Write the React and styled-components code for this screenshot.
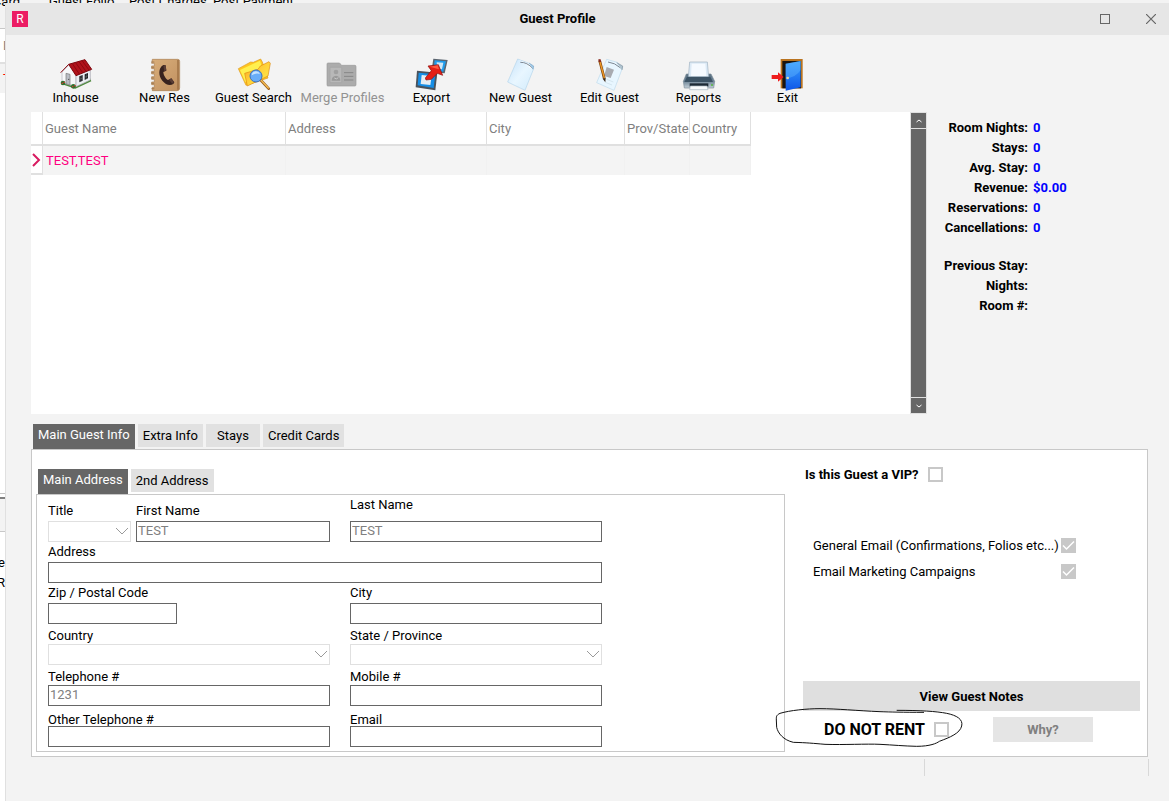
import React, { useState } from 'react';
import styled, { createGlobalStyle, css } from 'styled-components';

const palette = {
    window: '#f3f3f3',
    titlebar: '#e6e6e6',
    tab: '#e1e1e1',
    dark: '#666666',
    line: '#c8c8c8',
    lightline: '#e0e0e0',
    gray: '#808080',
    pink: '#ff0080',
    brand: '#ec1c64',
    blue: '#0000ff',
};

const GlobalStyle = createGlobalStyle`
    * {
        box-sizing: border-box;
    }
    body {
        margin: 0;
        background-color: white;
        color: black;
        font-family: Roboto, sans-serif;
        font-size: 13px;
        line-height: 16px;
    }
    button, input, select {
        margin: 0;
        font: inherit;
        border-radius: 0;
    }
`;

// parent window and dialog share one grid cell
const Desktop = styled.div`
    display: grid;
    min-height: 100vh;
    overflow: hidden;
    > * {
        grid-area: 1 / 1;
    }
`;

const ParentWindow = styled.div`
    display: flex;
    flex-direction: column;
    min-width: 0;
`;

const ParentMenu = styled.div`
    display: grid;
    grid-template-columns: 49px 80px 84px auto;
    grid-template-rows: 10px;
    align-items: end;
    height: 28px;
    background-color: ${palette.window};
    white-space: nowrap;

    .cut {
        display: flex;
        justify-content: flex-end;
        width: 20px;
    }
`;

const ParentBand = styled.div`
    display: flex;
    align-items: center;
    justify-content: ${(props) => (props.$end ? 'flex-end' : 'flex-start')};
    width: 5px;
    height: ${(props) => props.$height}px;
    padding-left: ${(props) => (props.$end ? 0 : 3)}px;
    color: ${(props) => props.$color || 'black'};
    background-color: ${(props) => (props.$shaded ? palette.window : 'white')};
    border-top: ${(props) => (props.$top ? `1px solid ${palette.line}` : 'none')};
    border-bottom: ${(props) => (props.$bottom ? `2px solid ${props.$bottom}` : 'none')};
`;

const Dialog = styled.main`
    display: flex;
    flex-direction: column;
    min-width: 0;
    margin: 3px 0 0 5px;
    background-color: ${palette.window};
    border-left: 1px solid ${palette.lightline};
`;

const TitleBar = styled.header`
    display: flex;
    align-items: center;
    height: 32px;
    padding-left: 6px;
    background-color: ${palette.titlebar};

    h1 {
        flex: 1;
        margin: 0;
        text-align: center;
        font-size: 13px;
        font-weight: bold;
    }
`;

const Logo = styled.span`
    width: 16px;
    height: 16px;
    text-align: center;
    font-size: 12px;
    color: white;
    background-color: ${palette.brand};
`;

const WindowButtons = styled.div`
    display: flex;
    gap: 10px;
`;

const WindowButton = styled.button`
    display: flex;
    align-items: center;
    justify-content: center;
    width: 36px;
    height: 32px;
    padding: 0;
    border: none;
    background: none;
`;

const Toolbar = styled.nav`
    display: flex;
    padding: 23px 0 6px 25px;
`;

const ToolButton = styled.button`
    display: flex;
    flex-direction: column;
    align-items: center;
    width: 89px;
    padding: 0;
    border: none;
    background: none;
    color: black;
    white-space: nowrap;

    &:disabled {
        color: #929292;
    }
    svg {
        display: block;
        overflow: visible;
    }
`;

const TopArea = styled.section`
    display: flex;
    height: 302px;
    padding-left: 25px;
`;

const GuestGrid = styled.div`
    flex: 1;
    min-width: 0;
    display: flex;
    justify-content: space-between;
    background-color: white;
`;

const GuestTable = styled.table`
    table-layout: fixed;
    width: 720px;
    height: 63px;
    border-collapse: separate;
    border-spacing: 0;

    th, td {
        padding: 0 0 0 2px;
        text-align: left;
        font-weight: normal;
        white-space: nowrap;
    }
    th {
        height: 34px;
        padding-top: 2px;
        color: ${palette.gray};
        border-right: 1px solid ${palette.lightline};
        border-bottom: 2px solid ${palette.lightline};
    }
    td {
        height: 29px;
        padding-left: 3px;
        color: ${palette.pink};
        background-color: #f4f4f4;
        border-right: 1px solid #f1f1f1;
    }
    td:first-child {
        padding: 0;
        background-color: white;
        border-right: 1px solid ${palette.lightline};
        border-bottom: 2px solid ${palette.lightline};
    }
    td svg {
        display: block;
        margin-left: 1px;
    }
`;

const ScrollBar = styled.div`
    display: flex;
    flex-direction: column;
    gap: 1px;
    width: 17px;
    padding: 1px;
    background-color: ${palette.lightline};
`;

const ScrollButton = styled.button`
    display: flex;
    align-items: center;
    justify-content: center;
    height: 15px;
    padding: 0;
    border: none;
    background-color: ${palette.dark};
`;

const ScrollTrack = styled.div`
    flex: 1;
    background-color: ${palette.dark};
`;

const Stats = styled.dl`
    display: grid;
    grid-template-columns: 101px 1fr;
    grid-auto-rows: 20px;
    column-gap: 5px;
    margin: 0;
    padding-top: 6px;
    font-weight: bold;
    line-height: 20px;

    dt {
        text-align: right;
    }
    dd {
        margin: 0;
        color: ${palette.blue};
    }
`;

const StatsColumn = styled.aside`
    width: 242px;

    dl + dl {
        margin-top: 12px;
    }
`;

const TabBar = styled.div`
    display: flex;
    align-items: flex-start;
    gap: 3px;
    height: 25px;
    padding-left: 2px;
`;

const Tab = styled.button`
    min-width: 54px;
    height: 23px;
    padding: 0 5px;
    border: none;
    line-height: 23px;
    color: black;
    background-color: ${palette.tab};

    ${(props) => props.$active && css`
        height: 25px;
        padding-bottom: 4px;
        line-height: 21px;
        color: white;
        background-color: ${palette.dark};
    `}
`;

const InfoArea = styled.section`
    padding: 10px 21px 0 25px;
`;

const InfoPanel = styled.div`
    display: grid;
    grid-template-columns: minmax(0, 753px) minmax(0, 1fr);
    background-color: white;
    border: 1px solid ${palette.line};
`;

const AddressColumn = styled.div`
    padding: 19px 0 4px 4px;
`;

const AddressForm = styled.form`
    display: grid;
    grid-template-columns: 83px 194px 267px;
    grid-auto-rows: minmax(41px, auto);
    align-items: end;
    column-gap: 5px;
    padding: 4px 11px;
    border: 1px solid ${palette.line};
`;

const FieldBox = styled.div`
    display: flex;
    flex-direction: column;
    grid-column: ${(props) => props.$column};
    gap: ${(props) => props.$gap}px;
    padding-left: ${(props) => (props.$right ? 15 : 0)}px;

    label {
        line-height: 12px;
        white-space: nowrap;
    }
`;

const TextInput = styled.input`
    width: ${(props) => (props.$width ? `${props.$width}px` : '100%')};
    height: 21px;
    padding: 0 1px 2px;
    color: ${palette.gray};
    background-color: white;
    border: 1px solid ${palette.dark};
    outline: none;
`;

const SelectBox = styled.div`
    position: relative;
    height: 21px;

    select {
        display: block;
        width: 100%;
        height: 21px;
        appearance: none;
        background-color: white;
        border: 1px solid ${palette.lightline};
    }
    svg {
        position: absolute;
        top: 6px;
        right: 2px;
        pointer-events: none;
    }
`;

const SideColumn = styled.div`
    display: flex;
    flex-direction: column;
    padding: 17px 7px 14px 18px;
`;

const CheckRow = styled.div`
    display: flex;
    align-items: center;
    gap: 9px;
    height: 15px;
    padding-left: ${(props) => props.$indent}px;

    label {
        width: ${(props) => (props.$labelWidth ? `${props.$labelWidth}px` : 'auto')};
        font-weight: ${(props) => (props.$bold ? 'bold' : 'normal')};
        font-size: ${(props) => (props.$large ? 16 : 13)}px;
        white-space: nowrap;
    }
`;

const CheckBox = styled.input`
    flex: none;
    width: 15px;
    height: 15px;
    appearance: none;
    background-color: white;
    border: 2px solid ${palette.line};

    &:checked {
        border: none;
        background: ${palette.line} url("data:image/svg+xml,%3Csvg xmlns='http://www.w3.org/2000/svg' width='15' height='15' fill='none' stroke='white' stroke-width='1.5'%3E%3Cpath d='M2 7.5 L5.5 11 L13 3.5'/%3E%3C/svg%3E");
    }
`;

const MailOptions = styled.div`
    display: flex;
    flex-direction: column;
    gap: 11px;
    margin-top: 56px;
`;

const NotesButton = styled.button`
    height: 30px;
    margin-top: auto;
    padding: 2px 0 0;
    border: none;
    font-weight: bold;
    color: black;
    background-color: #dfdfdf;
`;

const RentRow = styled.div`
    position: relative;
    display: flex;
    align-items: center;
    justify-content: space-between;
    margin-top: 6px;
    padding-right: 47px;
`;

const WhyButton = styled.button`
    width: 100px;
    height: 25px;
    padding: 1px 0 0;
    border: none;
    font-weight: bold;
    color: ${palette.gray};
    background-color: #e5e5e5;
`;

// hand drawn ring that lies over the row
const PenMark = styled.svg`
    position: absolute;
    left: -29px;
    top: -10px;
    pointer-events: none;
`;

const StatusBar = styled.footer`
    display: flex;
    justify-content: flex-end;
    padding: 2px 20px 25px 0;
`;

const StatusCell = styled.div`
    width: 225px;
    height: 17px;
    border: solid #d8d8d8;
    border-width: 0 1px;
`;

const Icon = ({ children }) => (
    <svg width="32" height="32" viewBox="0 0 96 96" aria-hidden="true">{children}</svg>
);

const HouseIcon = () => (
    <Icon>
        <path d="M4 78 L46 92 L94 70 L90 60 L46 80 L10 68Z" fill="#4d8a3c" />
        <path d="M6 42 L28 20 L48 50 L48 86 L6 74Z" fill="#f7f7f9" stroke="#b4b4bc" strokeWidth="2" />
        <path d="M48 50 L91 34 L91 66 L48 86Z" fill="#eceef4" stroke="#a4a4ae" strokeWidth="2" />
        <path d="M26 19 L75 5 L95 34 L48 53Z" fill="#b0121b" stroke="#7d060e" strokeWidth="3" />
        <path d="M37 17 L58 48 M47 14 L68 44 M57 11 L78 40 M67 9 L87 36" stroke="#8c0810" strokeWidth="3" />
        <path d="M26 19 L2 44" stroke="#8d0a12" strokeWidth="3" />
        <path d="M18 46 L30 49 L30 82 L18 77Z" fill="#b9bcc4" stroke="#777" strokeWidth="2" />
        <circle cx="26" cy="64" r="2" fill="#444" />
        <path d="M58 55 L68 51 L68 68 L58 73Z M74 49 L84 45 L84 61 L74 66Z" fill="#1d1f22" />
        <path d="M63 53 V71 M58 64 L68 60 M79 47 V64 M74 58 L84 53" stroke="#9b9da3" strokeWidth="1" />
        <circle cx="9" cy="75" r="7" fill="#2f7030" />
        <circle cx="40" cy="85" r="7" fill="#2f7030" />
        <path d="M5 74h4v4h-4z M11 71h4v4h-4z M36 84h4v4h-4z M43 81h4v4h-4z" fill="#d43a2e" />
    </Icon>
);

const PhoneBookIcon = () => (
    <Icon>
        <defs>
            <linearGradient id="leather" x1="0" y1="0" x2="1" y2="1">
                <stop offset="0" stopColor="#d9ae7a" />
                <stop offset="1" stopColor="#c09060" />
            </linearGradient>
        </defs>
        <path d="M10 4 H86 Q92 4 92 10 V90 Q92 98 84 98 H10 V88 H16 V80 H8 V72 H16 V64 H8 V56 H16 V48 H8 V40 H16 V32 H8 V24 H16 V16 H8Z" fill="url(#leather)" stroke="#a87c4e" strokeWidth="2" />
        <path d="M87 6 V95" stroke="#9a6c40" strokeWidth="4" />
        <path d="M7 12h9 M7 28h9 M7 44h9 M7 60h9 M7 76h9 M7 92h9" stroke="#8d6743" strokeWidth="2" />
        <path d="M43 21 C27 30 28 54 40 68 C50 80 62 85 73 78 L76 73 L67 61 L57 66 C50 63 43 50 43 42 L52 38 L50 22Z" fill="#38231f" />
        <path d="M43 23 L50 22 L52 37 L46 40Z M60 65 L67 61 L75 72 L70 77Z" fill="#5a3d35" />
    </Icon>
);

const SearchIcon = () => (
    <Icon>
        <defs>
            <linearGradient id="folder" x1="0" y1="0" x2="1" y2="1">
                <stop offset="0" stopColor="#ffa21c" />
                <stop offset="0.5" stopColor="#ffd23a" />
                <stop offset="1" stopColor="#fff04a" />
            </linearGradient>
        </defs>
        <path d="M1 32 L38 12 L46 13 L68 3 L73 12 L90 60 L24 82Z" fill="#ffc61f" stroke="#dd9a24" strokeWidth="2" />
        <path d="M6 36 L66 8 L76 42 L22 72Z" fill="#fff04e" />
        <path d="M20 46 L60 34 L67 24 L93 11 L97 16 L90 54 L28 84Z" fill="url(#folder)" stroke="#e08a12" strokeWidth="2" />
        <path d="M68 66 L92 92" stroke="#9b5d1b" strokeWidth="8" strokeLinecap="round" />
        <path d="M69 66 L91 90" stroke="#f3bb52" strokeWidth="4" strokeLinecap="round" />
        <circle cx="54" cy="54" r="18" fill="#69adf8" stroke="#3a6fc0" strokeWidth="3" />
        <path d="M41 52 A13 13 0 0 1 66 48 Q54 44 41 52Z" fill="#c6e3ff" />
    </Icon>
);

const MergeIcon = () => (
    <Icon>
        <path d="M2 84 Q0 84 0 80 V18 Q0 15 3 15 H36 Q40 15 43 22 H84 Q87 22 87 26 V80 Q87 84 84 84Z" fill="#acacac" stroke="#9c9c9c" strokeWidth="2" />
        <path d="M9 28 H44 V74 H9Z" fill="#b8b8b8" stroke="#a4a4a4" strokeWidth="2" />
        <circle cx="27" cy="42" r="7" fill="#a0a0a0" />
        <path d="M14 68 Q14 54 27 53 Q40 54 40 68Z" fill="#999" />
        <path d="M22 60 Q28 66 34 59" fill="none" stroke="#c8c8c8" strokeWidth="3" />
        <path d="M51 44 H79 M51 55 H79 M51 66 H79" stroke="#868686" strokeWidth="3" />
    </Icon>
);

const ExportIcon = () => (
    <Icon>
        <path d="M52 2 L95 6 L86 46 L46 42Z" fill="#5a646f" />
        <path d="M56 7 L90 10 L82 41 L52 38Z" fill="#1f9cec" />
        <path d="M62 13 L82 14 L78 34 L64 32Z" fill="#cfe6f4" />
        <path d="M3 38 L64 44 L58 97 L-1 88Z" fill="#4a535d" />
        <path d="M8 44 L58 49 L53 90 L5 82Z" fill="#168ee6" />
        <path d="M17 51 L47 54 L43 81 L14 78Z" fill="#e6edf3" />
        <path d="M28 60 L46 38 L36 24 L67 20 L80 52 L64 46 L46 64 L30 66Z" fill="#e41f16" stroke="#8d0d0a" strokeWidth="2" />
        <path d="M41 26 L65 22 L69 34Z" fill="#ff5a40" />
    </Icon>
);

const NewGuestIcon = () => (
    <Icon>
        <defs>
            <linearGradient id="sheet" x1="0" y1="0" x2="1" y2="1">
                <stop offset="0" stopColor="#c6e2fa" />
                <stop offset="0.5" stopColor="#e8f6ff" />
                <stop offset="1" stopColor="#d2ebfb" />
            </linearGradient>
        </defs>
        <path d="M38 3 L72 16 L86 32 L60 97 L8 72Z" fill="url(#sheet)" stroke="#b4d4ec" strokeWidth="2" />
        <path d="M40 5 L72 17 L84 32 L74 29 L66 20Z" fill="#f8fcff" />
        <path d="M46 13 Q66 12 84 32" fill="none" stroke="#7d8894" strokeWidth="3" />
        <path d="M72 15 L86 24 L84 34" fill="#9dc9e8" stroke="#7da5c5" strokeWidth="2" />
    </Icon>
);

const EditGuestIcon = () => (
    <Icon>
        <path d="M38 4 L70 13 L86 28 L60 97 L8 74Z" fill="#e8f6ff" stroke="#bcdaec" strokeWidth="2" />
        <path d="M42 12 Q62 14 80 30" fill="none" stroke="#7d8894" strokeWidth="3" />
        <path d="M68 14 L86 24 L84 36" fill="#b0c4d0" stroke="#7e919e" strokeWidth="2" />
        <path d="M38 27 L60 35 L50 60 L30 54Z" fill="#a8abb1" />
        <path d="M38 64 L58 72 M34 73 L54 81" stroke="#d5e6ef" strokeWidth="3" />
        <path d="M17 8 L31 62" stroke="#7b4512" strokeWidth="8" />
        <path d="M18 12 L31 60" stroke="#f19a25" strokeWidth="4" />
        <path d="M16 4 L18 12" stroke="#8a2a1e" strokeWidth="7" />
        <path d="M26 62 L35 60 L34 73Z" fill="#3b2a1c" />
    </Icon>
);

const PrinterIcon = () => (
    <Icon>
        <defs>
            <linearGradient id="printer" x1="0" y1="0" x2="0" y2="1">
                <stop offset="0" stopColor="#5d7384" />
                <stop offset="0.5" stopColor="#6b8294" />
                <stop offset="1" stopColor="#c4d0d9" />
            </linearGradient>
        </defs>
        <path d="M10 48 H84 L95 70 L92 90 H4 L1 70Z" fill="url(#printer)" stroke="#7b8c99" strokeWidth="2" />
        <path d="M20 12 H73 L77 57 H16Z" fill="#dceaf6" stroke="#9fb1c0" strokeWidth="2" />
        <path d="M26 17 H67 L70 54 H24Z" fill="#f5faff" />
        <path d="M12 56 H82 L90 72 H4Z" fill="#3c5365" />
        <path d="M20 76 H76 V86 H20Z" fill="#1c2a36" />
        <path d="M22 84 H72 L75 95 H20Z" fill="#f8fbfd" stroke="#a9b6c0" strokeWidth="2" />
        <path d="M84 79h6v4h-6z" fill="#55b83d" />
    </Icon>
);

const ExitIcon = () => (
    <Icon>
        <defs>
            <linearGradient id="door" x1="0" y1="0" x2="0" y2="1">
                <stop offset="0" stopColor="#3ba2ff" />
                <stop offset="1" stopColor="#0d56e8" />
            </linearGradient>
        </defs>
        <path d="M26 3 H92 V91 H26Z" fill="#b9731f" />
        <path d="M31 9 H87 V91 H31Z" fill="#191512" />
        <path d="M41 17 L86 9 V88 L41 98Z" fill="url(#door)" />
        <path d="M41 17 L86 9 V36 Q72 58 41 62Z" fill="#67baff" opacity="0.4" />
        <circle cx="47" cy="60" r="4" fill="#e8d9a0" />
        <path d="M-1 51 H18 V43 L35 57 L18 71 V63 H-1Z" fill="#ee1c1c" />
    </Icon>
);

const tools = [
    { label: 'Inhouse', icon: HouseIcon },
    { label: 'New Res', icon: PhoneBookIcon },
    { label: 'Guest Search', icon: SearchIcon },
    { label: 'Merge Profiles', icon: MergeIcon, disabled: true },
    { label: 'Export', icon: ExportIcon },
    { label: 'New Guest', icon: NewGuestIcon },
    { label: 'Edit Guest', icon: EditGuestIcon },
    { label: 'Reports', icon: PrinterIcon },
    { label: 'Exit', icon: ExitIcon },
];

const columns = [
    { label: 'Guest Name', width: 243 },
    { label: 'Address', width: 201 },
    { label: 'City', width: 138 },
    { label: 'Prov/State', width: 65 },
    { label: 'Country', width: 61 },
];

const totals = [
    ['Room Nights:', '0'],
    ['Stays:', '0'],
    ['Avg. Stay:', '0'],
    ['Revenue:', '$0.00'],
    ['Reservations:', '0'],
    ['Cancellations:', '0'],
];

const lastStay = [
    ['Previous Stay:', ''],
    ['Nights:', ''],
    ['Room #:', ''],
];

const infoTabs = ['Main Guest Info', 'Extra Info', 'Stays', 'Credit Cards'];
const addressTabs = ['Main Address', '2nd Address'];

const fields = [
    { id: 'title', label: 'Title', column: '1', gap: 4, select: true },
    { id: 'firstName', label: 'First Name', column: '2', gap: 4, value: 'TEST' },
    { id: 'lastName', label: 'Last Name', column: '3', gap: 10, value: 'TEST' },
    { id: 'address', label: 'Address', column: '1 / 4', gap: 4 },
    { id: 'zip', label: 'Zip / Postal Code', column: '1 / 3', gap: 4, width: 129 },
    { id: 'city', label: 'City', column: '3', gap: 4 },
    { id: 'country', label: 'Country', column: '1 / 3', gap: 2, select: true },
    { id: 'state', label: 'State / Province', column: '3', gap: 2, select: true },
    { id: 'telephone', label: 'Telephone #', column: '1 / 3', gap: 2, value: '1231' },
    { id: 'mobile', label: 'Mobile #', column: '3', gap: 2 },
    { id: 'otherPhone', label: 'Other Telephone #', column: '1 / 3', gap: 0 },
    { id: 'email', label: 'Email', column: '3', gap: 0 },
];

const Field = ({ field }) => (
    <FieldBox $column={field.column} $gap={field.gap} $right={field.column === '3'}>
        <label htmlFor={field.id}>{field.label}</label>
        {field.select ?
            <SelectBox>
                <select id={field.id} />
                <svg width="14" height="9" viewBox="0 0 14 9" fill="none" stroke="#9a9a9a">
                    <path d="M1 1 L7 7 L13 1" />
                </svg>
            </SelectBox> :
            <TextInput id={field.id} type="text" defaultValue={field.value} $width={field.width} />
        }
    </FieldBox>
);

const Tabs = ({ items, active, onChange }) => (
    <TabBar role="tablist">
        {items.map((item) => (
            <Tab
                key={item}
                type="button"
                role="tab"
                aria-selected={active === item}
                $active={active === item}
                onClick={() => onChange(item)}
            >
                {item}
            </Tab>
        ))}
    </TabBar>
);

const StatList = ({ items }) => (
    <Stats>
        {items.map(([label, value]) => (
            <React.Fragment key={label}>
                <dt>{label}</dt>
                <dd>{value}</dd>
            </React.Fragment>
        ))}
    </Stats>
);

const App = () => {
    const [infoTab, setInfoTab] = useState(infoTabs[0]);
    const [addressTab, setAddressTab] = useState(addressTabs[0]);

    return (
        <Desktop>
            <GlobalStyle />
            <ParentWindow aria-hidden="true">
                <ParentMenu>
                    <span className="cut">Card</span>
                    <span>Guest Folio</span>
                    <span>Post Charges</span>
                    <span>Post Payment</span>
                </ParentMenu>
                <ParentBand $height={36} $color={palette.gray} $top $bottom={palette.lightline}>D</ParentBand>
                <ParentBand $height={29} $color="red" $shaded>T</ParentBand>
                <ParentBand $height={400} />
                <ParentBand $height={6} $top $bottom={palette.gray} />
                <ParentBand $height={32} $shaded />
                <ParentBand $height={22} $top />
                <ParentBand $height={20} $end>e</ParentBand>
                <ParentBand $height={20} $end>R</ParentBand>
            </ParentWindow>
            <Dialog>
                <TitleBar>
                    <Logo>R</Logo>
                    <h1>Guest Profile</h1>
                    <WindowButtons>
                        <WindowButton type="button" aria-label="Maximize">
                            <svg width="10" height="10" viewBox="0 0 10 10" fill="none" stroke="#666">
                                <rect x="0.5" y="0.5" width="9" height="9" />
                            </svg>
                        </WindowButton>
                        <WindowButton type="button" aria-label="Close">
                            <svg width="10" height="10" viewBox="0 0 10 10" stroke="#666" strokeWidth="1.2">
                                <path d="M0 0 L10 10 M10 0 L0 10" />
                            </svg>
                        </WindowButton>
                    </WindowButtons>
                </TitleBar>
                <Toolbar>
                    {tools.map(({ label, icon: ToolIcon, disabled }) => (
                        <ToolButton key={label} type="button" disabled={disabled}>
                            <ToolIcon />
                            {label}
                        </ToolButton>
                    ))}
                </Toolbar>
                <TopArea>
                    <GuestGrid>
                        <div>
                            <GuestTable>
                                <colgroup>
                                    <col width="12" />
                                    {columns.map((column) => (
                                        <col key={column.label} width={column.width} />
                                    ))}
                                </colgroup>
                                <thead>
                                    <tr>
                                        <th />
                                        {columns.map((column) => (
                                            <th key={column.label}>{column.label}</th>
                                        ))}
                                    </tr>
                                </thead>
                                <tbody>
                                    <tr>
                                        <td>
                                            <svg width="9" height="14" viewBox="0 0 9 14" fill="none" stroke="#d81b60" strokeWidth="2">
                                                <path d="M1 1 L7 7 L1 13" />
                                            </svg>
                                        </td>
                                        <td>TEST,TEST</td>
                                        <td />
                                        <td />
                                        <td />
                                        <td />
                                    </tr>
                                </tbody>
                            </GuestTable>
                        </div>
                        <ScrollBar>
                            <ScrollButton type="button" aria-label="Scroll up">
                                <svg width="6" height="4" viewBox="0 0 6 4" fill="none" stroke="white">
                                    <path d="M0.5 3 L3 1 L5.5 3" />
                                </svg>
                            </ScrollButton>
                            <ScrollTrack />
                            <ScrollButton type="button" aria-label="Scroll down">
                                <svg width="6" height="4" viewBox="0 0 6 4" fill="none" stroke="white">
                                    <path d="M0.5 1 L3 3 L5.5 1" />
                                </svg>
                            </ScrollButton>
                        </ScrollBar>
                    </GuestGrid>
                    <StatsColumn>
                        <StatList items={totals} />
                        <StatList items={lastStay} />
                    </StatsColumn>
                </TopArea>
                <InfoArea>
                    <Tabs items={infoTabs} active={infoTab} onChange={setInfoTab} />
                    <InfoPanel>
                        <AddressColumn>
                            <Tabs items={addressTabs} active={addressTab} onChange={setAddressTab} />
                            <AddressForm>
                                {fields.map((field) => (
                                    <Field key={field.id} field={field} />
                                ))}
                            </AddressForm>
                        </AddressColumn>
                        <SideColumn>
                            <CheckRow $indent={2} $bold>
                                <label htmlFor="vip">Is this Guest a VIP?</label>
                                <CheckBox id="vip" type="checkbox" />
                            </CheckRow>
                            <MailOptions>
                                <CheckRow $indent={10} $labelWidth={239}>
                                    <label htmlFor="generalEmail">General Email (Confirmations, Folios etc...)</label>
                                    <CheckBox id="generalEmail" type="checkbox" defaultChecked disabled />
                                </CheckRow>
                                <CheckRow $indent={10} $labelWidth={239}>
                                    <label htmlFor="marketing">Email Marketing Campaigns</label>
                                    <CheckBox id="marketing" type="checkbox" defaultChecked disabled />
                                </CheckRow>
                            </MailOptions>
                            <NotesButton type="button">View Guest Notes</NotesButton>
                            <RentRow>
                                <CheckRow $indent={21} $bold $large>
                                    <label htmlFor="doNotRent">DO NOT RENT</label>
                                    <CheckBox id="doNotRent" type="checkbox" disabled />
                                </CheckRow>
                                <WhyButton type="button" disabled>Why?</WhyButton>
                                <PenMark width="190" height="42" viewBox="12 201 570 126" fill="none" stroke="#111" strokeWidth="3">
                                    <path d="M462 217 C400 217 360 216 330 215 C260 212 200 206 150 206 C110 206 60 211 30 220 C18 226 19 230 19 240 L20 262 C24 280 40 300 70 307 C110 308 130 310 165 313 C220 315 290 311 330 313 C370 315 400 318 440 319 C480 319 500 310 508 304 C540 292 570 280 575 258 C580 238 560 226 530 220 C500 214 450 211 380 211" />
                                </PenMark>
                            </RentRow>
                        </SideColumn>
                    </InfoPanel>
                </InfoArea>
                <StatusBar>
                    <StatusCell />
                </StatusBar>
            </Dialog>
        </Desktop>
    );
};

export default App;
